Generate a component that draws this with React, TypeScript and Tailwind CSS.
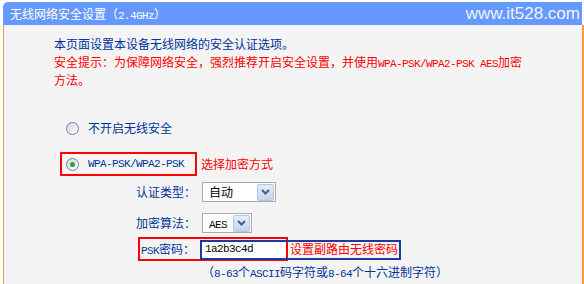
import type { ReactNode } from 'react';

function M({ children }: { children: ReactNode }) {
  return (
    <span className="font-['Liberation_Mono',monospace] text-[11px] tracking-[-0.6px] leading-none">{children}</span>
  );
}

function Radio({ checked }: { checked?: boolean }) {
  return (
    <div className="w-[13px] h-[13px] rounded-full border border-[#6b84a6] bg-linear-to-br from-[#d2d6dc] to-white flex items-center justify-center shrink-0">
      {checked && <div className="w-[5px] h-[5px] rounded-full bg-[#2aa43a]" />}
    </div>
  );
}

function Chevron() {
  return (
    <svg width="9" height="6" viewBox="0 0 9 6">
      <path d="M1 1 L4.5 4.5 L8 1" fill="none" stroke="#4a5d82" strokeWidth="2" />
    </svg>
  );
}

function Select({ value, width }: { value: ReactNode; width: string }) {
  return (
    <div className={`${width} h-[20px] border border-[#a5acb2] bg-white flex items-center justify-between pl-[6px] pr-[1px] text-black`}>
      <span>{value}</span>
      <div className="w-[17px] h-[17px] border border-[#b5c6e4] rounded-[2px] bg-linear-to-b from-[#e6eefc] to-[#c3d4f1] flex items-center justify-center">
        <Chevron />
      </div>
    </div>
  );
}

export default function App() {
  return (
    <div className="w-[584px] h-[284px] bg-white overflow-hidden font-['Noto_Sans_CJK_SC',sans-serif] text-[12px] leading-[18px]">
      <div className="ml-[3px] mt-[2px] w-[579px] h-[23px] bg-[#6699ff] rounded-tl-[5px] flex items-center justify-between pl-[7px] pr-[2px] text-white">
        <span>
          无线网络安全设置（<M>2.4GHz</M>）
        </span>
        <span className="font-['Liberation_Sans',sans-serif] text-[17px] text-[#eef3ff]">www.it528.com</span>
      </div>

      <div className="ml-[3px] w-[581px] h-[259px] bg-[#f4f4f4] border-l border-l-[#f0a24a] border-r-2 border-r-[#ff9a2e] pt-[10px] text-[#003399]">
        <div className="pl-[50px]">
          <p className="h-[18px]">本页面设置本设备无线网络的安全认证选项。</p>
          <p className="h-[18px] text-[#ff0000]">
            安全提示：为保障网络安全，强烈推荐开启安全设置，并使用<M>WPA-PSK/WPA2-PSK AES</M>加密
          </p>
          <p className="h-[18px] text-[#ff0000]">方法。</p>
        </div>

        <div className="mt-[27px] h-[24px] pl-[62px] flex items-center gap-[9px]">
          <Radio />
          <span>不开启无线安全</span>
        </div>

        <div className="mt-[12px] flex items-center">
          <div className="ml-[56px] w-[137px] h-[24px] border-2 border-[#ff0000] flex items-center pl-[4px] gap-[9px]">
            <Radio checked />
            <M>WPA-PSK/WPA2-PSK</M>
          </div>
          <span className="ml-[4px] text-[#ff0000]">选择加密方式</span>
        </div>

        <div className="mt-[6px] pl-[132px] flex items-center">
          <span className="w-[66px]">认证类型：</span>
          <Select value="自动" width="w-[74px]" />
        </div>

        <div className="mt-[11px] pl-[132px] flex items-center">
          <span className="w-[66px]">加密算法：</span>
          <Select value={<M>AES</M>} width="w-[50px]" />
        </div>

        <div className="relative mt-[4px] h-[24px] pl-[137px] flex items-center">
          <span className="w-[61px]">
            <M>PSK</M>密码：
          </span>
          <div className="w-[85px] h-[18px] bg-white text-black pl-[3px] flex items-center">
            <M>1a2b3c4d</M>
          </div>
          <span className="ml-[3px] text-[#ff0000]">设置副路由无线密码</span>
          <div className="absolute left-[134px] top-0 w-[150px] h-[24px] border-2 border-[#ff0000]" />
          <div className="absolute left-[196px] top-[3px] w-[201px] h-[20px] border-2 border-[#1c3a9e]" />
        </div>

        <p className="h-[18px] mt-[2px] pl-[198px]">
          （<M>8-63</M>个<M>ASCII</M>码字符或<M>8-64</M>个十六进制字符）
        </p>
      </div>
    </div>
  );
}
